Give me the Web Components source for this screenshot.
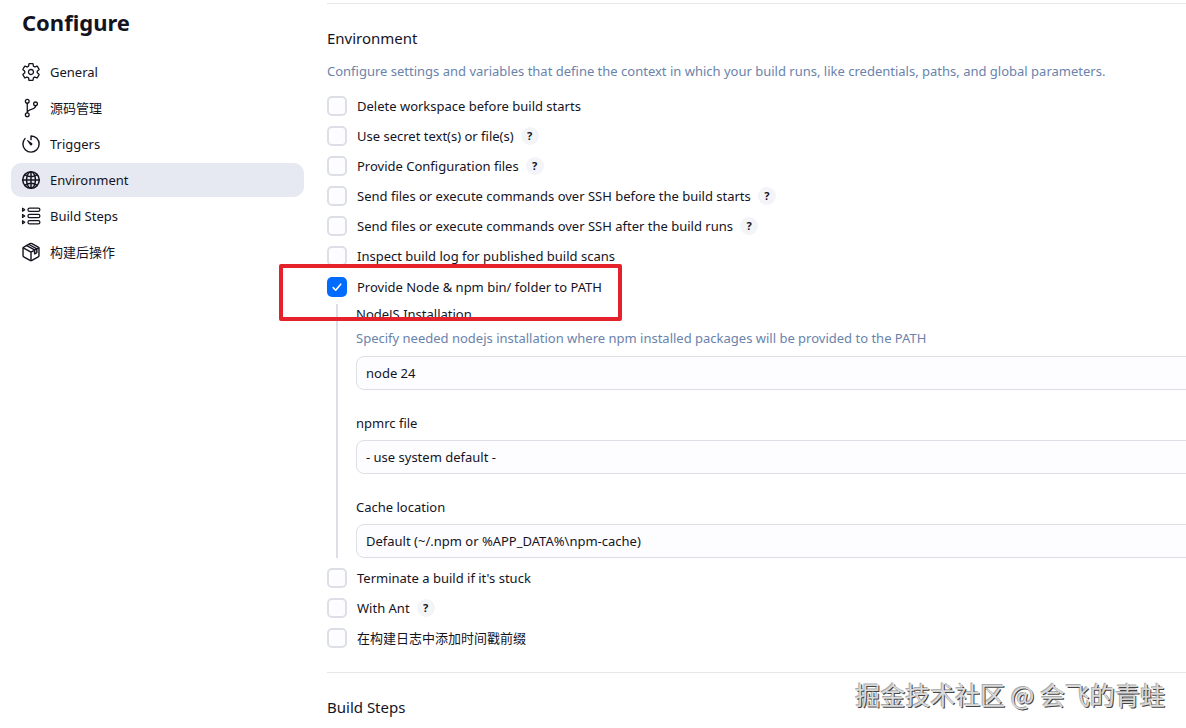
<!DOCTYPE html>
<html lang="zh-CN">
<head>
<meta charset="utf-8">
<meta name="viewport" content="width=device-width, initial-scale=1">
<title>Configure</title>
<style>
  :root {
    --ink: #14141f;
    --muted: #6a83ab;
    --line: #dcdfe6;
    --accent: #006bff;
  }
  html, body { margin: 0; height: 100%; }
  body {
    overflow: hidden;
    background: #fff;
    color: var(--ink);
    font: 13px/20px "Noto Sans", "Noto Sans CJK SC", sans-serif;
  }
</style>
</head>
<body>
<config-page>
  <side-nav slot="nav" heading="Configure">
    <nav-item icon="gear">General</nav-item>
    <nav-item icon="branch">源码管理</nav-item>
    <nav-item icon="timer">Triggers</nav-item>
    <nav-item icon="globe" current>Environment</nav-item>
    <nav-item icon="steps">Build Steps</nav-item>
    <nav-item icon="cube">构建后操作</nav-item>
  </side-nav>

  <config-section heading="Environment">
    <span slot="description">Configure settings and variables that define the context in which your build runs, like credentials, paths, and global parameters.</span>
    <check-option>Delete workspace before build starts</check-option>
    <check-option help>Use secret text(s) or file(s)</check-option>
    <check-option help>Provide Configuration files</check-option>
    <check-option help>Send files or execute commands over SSH before the build starts</check-option>
    <check-option help>Send files or execute commands over SSH after the build runs</check-option>
    <check-option>Inspect build log for published build scans</check-option>
    <check-option checked marked>Provide Node &amp; npm bin/ folder to PATH
      <select-field slot="nested" label="NodeJS Installation" value="node 24" hint="Specify needed nodejs installation where npm installed packages will be provided to the PATH"></select-field>
      <select-field slot="nested" label="npmrc file" value="- use system default -"></select-field>
      <select-field slot="nested" label="Cache location" value="Default (~/.npm or %APP_DATA%\npm-cache)"></select-field>
    </check-option>
    <check-option>Terminate a build if it's stuck</check-option>
    <check-option help>With Ant</check-option>
    <check-option>在构建日志中添加时间戳前缀</check-option>
  </config-section>
  <config-section heading="Build Steps"></config-section>

  <water-mark slot="overlay">掘金技术社区 @ 会飞的青蛙</water-mark>
</config-page>

<script>
const define = (name, render) => customElements.define(name, class extends HTMLElement {
  connectedCallback() {
    if (this.shadowRoot) return;
    this.attachShadow({ mode: 'open' }).innerHTML = render(this);
  }
});

const icons = {
  gear: '<path d="M262.29 192.31a64 64 0 1057.4 57.4 64.13 64.13 0 00-57.4-57.4zM416.39 256a154.34 154.34 0 01-1.53 20.79l45.21 35.46a10.81 10.81 0 012.45 13.75l-42.77 74a10.81 10.81 0 01-13.14 4.59l-44.9-18.08a16.11 16.11 0 00-15.17 1.75A164.48 164.48 0 01325 400.8a15.94 15.94 0 00-8.82 12.14l-6.73 47.89a11.08 11.08 0 01-10.68 9.17h-85.54a11.11 11.11 0 01-10.69-8.87l-6.72-47.82a16.07 16.07 0 00-9-12.22 155.3 155.3 0 01-21.46-12.57 16 16 0 00-15.11-1.71l-44.89 18.07a10.81 10.81 0 01-13.14-4.58l-42.77-74a10.8 10.8 0 012.45-13.75l38.21-30a16.05 16.05 0 006-14.08c-.36-4.17-.58-8.33-.58-12.5s.21-8.27.58-12.35a16 16 0 00-6.07-13.94l-38.19-30A10.81 10.81 0 0149.48 186l42.77-74a10.81 10.81 0 0113.14-4.59l44.9 18.08a16.11 16.11 0 0015.17-1.75A164.48 164.48 0 01187 111.2a15.94 15.94 0 008.82-12.14l6.73-47.89A11.08 11.08 0 01213.23 42h85.54a11.11 11.11 0 0110.69 8.87l6.72 47.82a16.07 16.07 0 009 12.22 155.3 155.3 0 0121.46 12.57 16 16 0 0015.11 1.71l44.89-18.07a10.81 10.81 0 0113.14 4.58l42.77 74a10.8 10.8 0 01-2.45 13.75l-38.21 30a16.05 16.05 0 00-6.05 14.08c.33 4.14.55 8.3.55 12.47z"/>',
  branch: '<circle cx="160" cy="84" r="48"/><circle cx="160" cy="428" r="48"/><circle cx="372" cy="150" r="48"/><path d="M160 380V132M372 198c0 128-212 58-212 182"/>',
  timer: '<path d="M112.91 128A191.85 191.85 0 0064 254c-1.18 106.35 85.65 193.8 192 194 106.2.2 192-85.83 192-192 0-104.54-83.55-189.61-187.5-192a4.36 4.36 0 00-4.5 4.37V152" transform="translate(-20 -20) scale(1.08)"/><path fill="currentColor" stroke="none" d="M233.38 278.63l-79-113a8.13 8.13 0 0111.32-11.32l113 79a32.5 32.5 0 01-37.25 53.26 33.21 33.21 0 01-8.07-7.94z"/>',
  globe: '<g stroke-width="38"><circle cx="256" cy="256" r="212"/><ellipse cx="256" cy="256" rx="113" ry="208"/><path d="M107.33 127.33c38.24 27.15 96.38 43.34 148.67 43.34s110.43-16.19 148.67-43.34M404.67 384.67c-38.24-27.15-96.38-43.34-148.67-43.34s-110.43 16.19-148.67 43.34M256 48v416M464 256H48"/></g>',
  steps: '<g stroke-width="32"><rect x="178" y="54" width="306" height="84" rx="42"/><rect x="178" y="214" width="306" height="84" rx="42"/><rect x="178" y="374" width="306" height="84" rx="42"/><path d="M40 58v76l56-38zM40 218v76l56-38zM40 378v76l56-38z"/></g>',
  cube: '<g stroke-width="36"><path d="M460 350V162a32 32 0 00-18-28L280 42a48 48 0 00-48 0L70 134a32 32 0 00-18 28v188a32 32 0 0018 28l162 92a48 48 0 0048 0l162-92a32 32 0 0018-28z"/><path d="M58 148l198 112 198-112M256 476V260M148 92l200 112M206 64l200 112M348 208v96l58-34v-92"/></g>'
};

define('config-page', () => `
  <style>
    :host { display: grid; grid-template-columns: 304px minmax(0, 1fr); position: relative; min-height: 100%; overflow: hidden; }
    main { padding: 3px 0 0 23px; }
  </style>
  <slot name="nav"></slot>
  <main><slot></slot></main>
  <slot name="overlay"></slot>`);

define('side-nav', el => `
  <style>
    :host { display: block; padding: 6px 0 0 11px; }
    h1 { margin: 0 0 17px 11px; font-size: 22px; line-height: 32px; font-weight: 700; }
    nav { display: flex; flex-direction: column; gap: 2px; }
  </style>
  <h1>${el.getAttribute('heading')}</h1>
  <nav aria-label="Sections"><slot></slot></nav>`);

define('nav-item', el => `
  <style>
    :host { display: block; }
    a { display: flex; align-items: center; gap: 9px; height: 34px; padding-left: 10px; border-radius: 10px; color: inherit; text-decoration: none; }
    a[aria-current] { background: #e7e9f2; }
    svg { width: 20px; height: 20px; fill: none; stroke: currentColor; stroke-width: 34; stroke-linecap: round; stroke-linejoin: round; }
  </style>
  <a href="#" ${el.hasAttribute('current') ? 'aria-current="page"' : ''}>
    <svg viewBox="0 0 512 512" aria-hidden="true">${icons[el.getAttribute('icon')]}</svg>
    <span><slot></slot></span>
  </a>`);

define('config-section', el => `
  <style>
    :host { display: block; border-top: 1px solid #e6e7ea; padding: 23px 0 24px; }
    h2 { margin: 0; font-size: 15px; line-height: 22px; font-weight: 400; }
    p { margin: 12px 0 15px; color: var(--muted); white-space: nowrap; }
    .options { display: flex; flex-direction: column; gap: 10px; }
  </style>
  <h2>${el.getAttribute('heading')}</h2>
  ${el.children.length ? '<p><slot name="description"></slot></p><div class="options"><slot></slot></div>' : ''}`);

define('check-option', el => `
  <style>
    :host { display: block; }
    :host([checked]) { padding-top: 1px; }
    .row { display: flex; align-items: center; gap: 7px; height: 20px; position: relative; white-space: nowrap; }
    label { display: flex; align-items: center; gap: 10px; }
    input { appearance: none; flex: none; box-sizing: border-box; width: 20px; height: 20px; margin: 0; border: 2px solid var(--line); border-radius: 5px; background: #fdfdff; }
    input:checked { border: 0; background: var(--accent); }
    .tick { position: absolute; left: 0; top: 0; width: 20px; height: 20px; fill: none; stroke: #fff; stroke-width: 1.6; stroke-linecap: round; stroke-linejoin: round; pointer-events: none; }
    button { width: 18px; height: 18px; margin: 0; padding: 0; border: 0; border-radius: 9px; background: #f2f4f8; color: inherit; font: 700 11px/18px "Noto Sans", sans-serif; }
    .nested { display: grid; gap: 23px; margin: 7px -24px 0 9px; padding-left: 18px; border-left: 2px solid var(--line); }
    .mark { position: absolute; left: -48px; top: -13px; width: 335px; height: 49px; border: 4px solid #e5222b; border-radius: 2px; pointer-events: none; z-index: 1; }
  </style>
  <div class="row">
    <label><input type="checkbox" ${el.hasAttribute('checked') ? 'checked' : ''}><span><slot></slot></span></label>
    ${el.hasAttribute('checked') ? '<svg class="tick" viewBox="0 0 20 20" aria-hidden="true"><path d="M6.2 10.6l2.5 2.6 5-6"/></svg>' : ''}
    ${el.hasAttribute('help') ? '<button type="button" aria-label="Help">?</button>' : ''}
    ${el.hasAttribute('marked') ? '<span class="mark"></span>' : ''}
  </div>
  ${el.querySelector('[slot=nested]') ? '<div class="nested"><slot name="nested"></slot></div>' : ''}`);

define('select-field', el => `
  <style>
    :host { display: block; }
    label { display: block; line-height: 20px; }
    p { margin: 4px 0 8px; color: var(--muted); white-space: nowrap; }
    select { appearance: none; display: block; box-sizing: border-box; width: 100%; height: 34px; margin: 7px 0 0; padding: 0 9px; border: 1px solid var(--line); border-radius: 8px; background: #fdfdff; color: inherit; font: inherit; }
  </style>
  <label for="field">${el.getAttribute('label')}</label>
  ${el.hasAttribute('hint') ? `<p>${el.getAttribute('hint')}</p>` : ''}
  <select id="field"><option>${el.getAttribute('value')}</option></select>`);

define('water-mark', () => `
  <style>
    :host { position: absolute; right: 21px; bottom: 30px; font: 25px/36px "Noto Sans CJK SC", sans-serif; color: #d9d9d9; text-shadow: 1px 1px 0 #444, -1px -1px 0 #aaa; white-space: nowrap; pointer-events: none; }
  </style>
  <slot></slot>`);
</script>
</body>
</html>
